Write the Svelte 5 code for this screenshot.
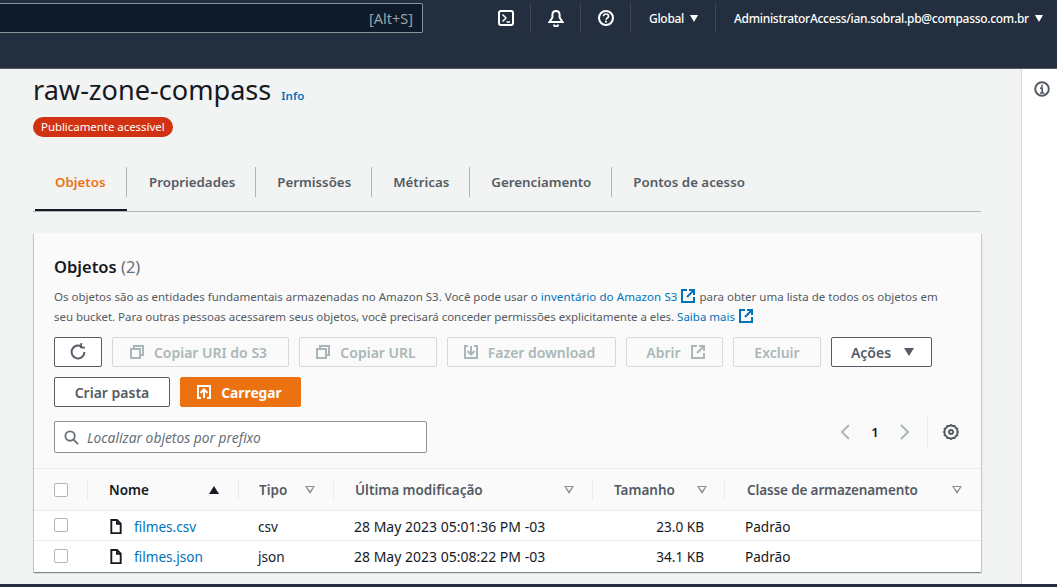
<script>
  const tabs = ['Objetos', 'Propriedades', 'Permissões', 'Métricas', 'Gerenciamento', 'Pontos de acesso']

  const columns = [
    { label: 'Nome', sort: 'asc' },
    { label: 'Tipo' },
    { label: 'Última modificação' },
    { label: 'Tamanho' },
    { label: 'Classe de armazenamento' },
  ]

  const objects = [
    { name: 'filmes.csv', type: 'csv', modified: '28 May 2023 05:01:36 PM -03', size: '23.0 KB', storage: 'Padrão' },
    { name: 'filmes.json', type: 'json', modified: '28 May 2023 05:08:22 PM -03', size: '34.1 KB', storage: 'Padrão' },
  ]
</script>

{#snippet external(cls)}
  <svg class={cls} viewBox="0 0 14 14" width="14" height="14" fill="none" stroke="currentColor" stroke-width="2">
    <path d="M6 1H1v12h12V8" />
    <path d="M8 1h5v5M13 1 6 8" />
  </svg>
{/snippet}

{#snippet copy()}
  <svg viewBox="0 0 14 14" width="14" height="14" fill="none" stroke="currentColor" stroke-width="2">
    <rect x="1" y="4" width="9" height="9" />
    <path d="M4 3V1h9v9h-2" />
  </svg>
{/snippet}

<div class="page">
  <header class="topbar">
    <div class="top-row">
      <div class="search"><span>[Alt+S]</span></div>
      <div class="top-items">
        <div class="top-icon first">
          <svg viewBox="0 0 16 16" width="16" height="16" fill="none" stroke="#fff" stroke-width="2">
            <rect x="1" y="1" width="14" height="14" rx="2" />
            <path d="M4.5 4.5 8 8l-3.5 3.500M8.500 12H12" stroke-width="1.500" />
          </svg>
        </div>
        <div class="top-icon">
          <svg viewBox="0 0 18 18" width="18" height="18" fill="none" stroke="#fff" stroke-width="2">
            <path d="M9 2c-2.5 0-3.600 2-3.600 4v2.500L2.500 13h13l-2.900-4.500V6C12.600 4 11.500 2 9 2Z" />
            <path d="M7 15.500a2 2 0 0 0 4 0" />
          </svg>
        </div>
        <div class="top-icon">
          <svg viewBox="0 0 16 16" width="16" height="16" fill="none" stroke="#fff" stroke-width="2">
            <circle cx="8" cy="8" r="7" />
            <path d="M5.500 6.300C5.500 4.800 6.700 4 8 4s2.500.8 2.500 2.200c0 2-2.500 1.800-2.500 3.600" stroke-width="1.700" />
            <path d="M8 10.800v1.700" />
          </svg>
        </div>
        <div class="top-label region">Global <i class="caret"></i></div>
        <div class="top-label account">AdministratorAccess/ian.sobral.pb@compasso.com.br <i class="caret"></i></div>
      </div>
    </div>
  </header>

  <div class="body">
    <main class="content">
      <div class="title-row">
        <h1>raw-zone-compass</h1>
        <a class="info">Info</a>
      </div>
      <span class="badge">Publicamente acessível</span>

      <nav class="tabs">
        {#each tabs as tab, i}
          <div class="tab" class:active={i === 0}><span>{tab}</span></div>
        {/each}
      </nav>

      <section class="card">
        <div class="card-head">
          <h2>Objetos <span>(2)</span></h2>
          <p>
            Os objetos são as entidades fundamentais armazenadas no Amazon S3. Você pode usar o
            <a class="inv">inventário do Amazon S3</a> {@render external('ext')} para obter uma lista de todos os objetos em<br />
            <span class="second">seu bucket. Para outras pessoas acessarem seus objetos, você precisará conceder permissões explicitamente a eles.</span>
            <a>Saiba mais</a> {@render external('ext')}
          </p>

          <div class="actions">
            <button class="btn refresh" aria-label="Atualizar">
              <svg viewBox="0 0 18 18" width="18" height="18" fill="none" stroke="#545b64" stroke-width="2">
                <path d="M15.500 9A6.500 6.500 0 1 1 12.500 3.500" />
                <path d="M12 .5v4h4" stroke-width="1.800" transform="rotate(8 14 3)" />
              </svg>
            </button>
            <button class="btn off w-uri">{@render copy()} Copiar URI do S3</button>
            <button class="btn off w-url">{@render copy()} Copiar URL</button>
            <button class="btn off w-dl">
              <svg viewBox="0 0 14 14" width="14" height="14" fill="none" stroke="currentColor" stroke-width="2">
                <path d="M4 1H1v12h12V1h-3" />
                <path d="M7 1v8M3.500 6 7 9.500 10.500 6" />
              </svg>
              Fazer download
            </button>
            <button class="btn off w-open">Abrir {@render external('')}</button>
            <button class="btn off w-del">Excluir</button>
            <button class="btn w-act">Ações <i class="caret big"></i></button>
            <button class="btn w-new">Criar pasta</button>
            <button class="btn primary">
              <svg viewBox="0 0 14 14" width="14" height="14" fill="none" stroke="#fff" stroke-width="2">
                <path d="M4 13H1V1h12v12h-3" />
                <path d="M7 13V5M3.500 8 7 4.500 10.500 8" />
              </svg>
              Carregar
            </button>
          </div>

          <div class="filter-row">
            <div class="filter">
              <svg viewBox="0 0 16 16" width="15" height="15" fill="none" stroke="#687078" stroke-width="2">
                <circle cx="6.500" cy="6.500" r="5" />
                <path d="m10 10 5 5" />
              </svg>
              <span>Localizar objetos por prefixo</span>
            </div>
            <div class="pager">
              <svg viewBox="0 0 10 16" width="10" height="16" fill="none" stroke="#aab7b8" stroke-width="2"><path d="M9 1 2 8l7 7" /></svg>
              <b>1</b>
              <svg viewBox="0 0 10 16" width="10" height="16" fill="none" stroke="#aab7b8" stroke-width="2"><path d="m1 1 7 7-7 7" /></svg>
              <div class="gear">
                <svg viewBox="0 0 16 16" width="16" height="16" fill="none" stroke="#545b64" stroke-width="2">
                  <path d="M8 1l1.600 1.100 2-.1 1 1.800 1.700 1-.1 2L15 8l-.8 1.300.1 1.900-1.700 1-1 1.800-2-.1L8 15l-1.600-1.100-2 .1-1-1.800-1.700-1 .1-1.900L1 8l.8-1.200-.1-2 1.700-1 1-1.800 2 .1L8 1Z" />
                  <circle cx="8" cy="8" r="2" />
                </svg>
              </div>
            </div>
          </div>
        </div>

        <div class="grid head">
          <div class="check-cell"><span class="check"></span></div>
          {#each columns as col}
            <div class="th" class:sorted={col.sort}>
              <span>{col.label}</span>
              <i class="sort"></i>
            </div>
          {/each}
        </div>
        {#each objects as obj}
          <div class="grid row">
            <div class="check-cell"><span class="check"></span></div>
            <div class="name">
              <svg viewBox="0 0 12 16" width="12" height="15" fill="none" stroke="#16191f" stroke-width="2">
                <path d="M1 1h6l4 4v10H1Z" />
                <path d="M7 1v4h4" />
              </svg>
              <a>{obj.name}</a>
            </div>
            <div class="type">{obj.type}</div>
            <div class="date">{obj.modified}</div>
            <div class="size">{obj.size}</div>
            <div class="storage">{obj.storage}</div>
          </div>
        {/each}
      </section>
    </main>

    <aside class="rail">
      <svg viewBox="0 0 16 16" width="16" height="16" fill="none" stroke="#545b64" stroke-width="2">
        <circle cx="8" cy="8" r="6.800" />
        <path d="M6 7.200h2.200V12M6 12h4.400M8 3.800v2" stroke-width="1.700" />
      </svg>
    </aside>
  </div>
  <div class="footer"></div>
</div>

<style>
  :global(body) {
    margin: 0;
    background: #f2f3f3;
    overflow: hidden;
  }

  .page {
    width: 1057px;
    height: 587px;
    display: flex;
    flex-direction: column;
    overflow: hidden;
    font-family: "Noto Sans", "Open Sans", sans-serif;
    color: #16191f;
  }

  /* top navigation */
  .topbar {
    height: 68px;
    flex: none;
    background: #232f3e;
    border-bottom: 1px solid #545b64;
    box-sizing: content-box;
  }
  .top-row {
    display: flex;
    align-items: flex-start;
    padding-top: 3px;
  }
  .search {
    width: 423px;
    height: 30px;
    flex: none;
    box-sizing: border-box;
    background: #0f1b2a;
    border: 1px solid #879596;
    border-left: 0;
    border-radius: 0 2px 2px 0;
    display: flex;
    align-items: center;
    justify-content: flex-end;
    padding-right: 9px;
    color: #95a5a6;
    font-size: 14.500px;
  }
  .top-items {
    flex: 1;
    display: flex;
    align-items: center;
    height: 30px;
    color: #fff;
    font-size: 12px;
  }
  .top-icon {
    width: 49px;
    height: 30px;
    display: flex;
    align-items: center;
    justify-content: center;
    border-right: 1px solid #414750;
    box-sizing: content-box;
  }
  .top-icon.first { margin-left: 58px; }
  .top-label {
    height: 30px;
    display: flex;
    align-items: center;
    gap: 6px;
    white-space: nowrap;
    letter-spacing: -0.3px;
    font-weight: 500;
  }
  .region {
    width: 85px;
    box-sizing: border-box;
    padding-left: 18px;
    border-right: 1px solid #414750;
  }
  .account { padding-left: 18px; }
  .caret {
    width: 0;
    height: 0;
    border-left: 4px solid transparent;
    border-right: 4px solid transparent;
    border-top: 7px solid #fff;
  }
  .caret.big {
    border-left-width: 5.500px;
    border-right-width: 5.500px;
    border-top: 8px solid #545b64;
    margin-left: 7px;
  }

  .body {
    flex: 1;
    display: flex;
    min-height: 0;
  }
  .content {
    width: 1021px;
    flex: none;
    box-sizing: border-box;
    padding: 3px 40px 0 33px;
    background: #f2f3f3;
  }
  .rail {
    flex: 1;
    background: #fff;
    border-left: 1px solid #d5dbdb;
    display: flex;
    justify-content: center;
    padding: 12px 6px 0 11px;
    box-sizing: border-box;
    align-items: flex-start;
  }
  .footer {
    height: 3px;
    flex: none;
    background: #232f3e;
  }

  /* title */
  .title-row {
    display: flex;
    align-items: baseline;
    gap: 10px;
  }
  h1 {
    margin: 0;
    font-size: 27.100px;
    line-height: 36px;
    font-weight: 400;
    color: #16191f;
  }
  .info {
    font-size: 11.500px;
    font-weight: 600;
    color: #0073bb;
  }
  .badge {
    display: inline-block;
    margin-top: 9px;
    height: 20px;
    line-height: 19px;
    padding: 0 8px;
    border-radius: 10px;
    background: #d13212;
    color: #fff;
    font-size: 11.400px;
    white-space: nowrap;
    vertical-align: top;
  }

  /* tabs */
  .tabs {
    margin: 26px 0 0 0;
    height: 48px;
    display: flex;
    border-bottom: 1px solid #aab7b8;
    box-sizing: content-box;
  }
  .tab {
    height: 48px;
    display: flex;
    align-items: center;
    padding: 0 21px;
    box-sizing: border-box;
    font-size: 13.300px;
    font-weight: 600;
    color: #545b64;
    white-space: nowrap;
    position: relative;
  }
  .tab span {
    margin-bottom: 10px;
  }
  .tab::after {
    content: '';
    position: absolute;
    right: 0;
    top: 4px;
    height: 30px;
    width: 1px;
    background: #aab7b8;
  }
  .tab:last-child::after { display: none; }
  .tab.active {
    color: #ec7211;
    border-bottom: 2px solid #16191f;
    width: 92px;
    margin-left: 2px;
    padding-left: 20px;
  }
  .tab.active span { margin-bottom: 8px; }
  .tab.active::after { right: 0; }
  .tab.active + .tab { margin-left: 1px; }

  /* card */
  .card {
    margin: 21px 0 0 1px;
    background: #fafafa;
    box-shadow: 0 1px 1px rgba(0, 28, 36, 0.3), 1px 1px 1px rgba(0, 28, 36, 0.15), -1px 1px 1px rgba(0, 28, 36, 0.15);
  }
  .card-head {
    padding: 22px 20px 11px;
    border-bottom: 1px solid #eaeded;
  }
  h2 {
    margin: 0;
    font-size: 16.500px;
    line-height: 24px;
    font-weight: 600;
    color: #16191f;
  }
  h2 span {
    font-weight: 400;
    color: #687078;
  }
  p {
    margin: 8px 0 0;
    font-size: 11.500px;
    line-height: 20px;
    color: #545b64;
    white-space: nowrap;
  }
  p a { color: #0073bb; }
  .inv { letter-spacing: 0.09px; }
  .second { letter-spacing: -0.045px; }
  .ext {
    color: #0073bb;
    vertical-align: -2px;
    margin: 0 1px;
  }

  .actions {
    margin-top: 10px;
    display: flex;
    flex-wrap: wrap;
    gap: 10px;
  }
  .btn {
    height: 30px;
    box-sizing: border-box;
    display: inline-flex;
    align-items: center;
    justify-content: center;
    gap: 10px;
    padding: 0;
    background: #fff;
    border: 1px solid #545b64;
    border-radius: 2px;
    font-family: inherit;
    font-size: 14px;
    font-weight: 600;
    color: #545b64;
    white-space: nowrap;
  }
  .btn.off {
    border-color: #d5dbdb;
    background: #fafafa;
    color: #aab7b8;
  }
  .refresh { width: 48px; }
  .w-uri { width: 177px; padding-right: 4px; }
  .w-url { width: 138px; padding-right: 4px; }
  .w-dl { width: 169px; padding-right: 4px; }
  .w-open { width: 97px; padding-left: 2px; }
  .w-del { width: 88px; }
  .w-act { width: 101px; gap: 6px; padding-left: 2px; }
  .w-new { width: 116px; }
  .btn.primary {
    width: 121px;
    padding-right: 2px;
    background: #ec7211;
    border-color: #ec7211;
    color: #fff;
    font-size: 13.800px;
    font-weight: 700;
  }

  .filter-row {
    margin-top: 10px;
    display: flex;
    align-items: center;
    justify-content: space-between;
  }
  .filter {
    width: 373px;
    height: 32px;
    box-sizing: border-box;
    background: #fff;
    border: 1px solid #879596;
    border-radius: 2px;
    display: flex;
    align-items: center;
    gap: 8px;
    padding-left: 9px;
    font-size: 13.800px;
    font-style: italic;
    color: #687078;
  }
  .pager {
    display: flex;
    align-items: center;
    margin-bottom: 10px;
    padding-right: 2px;
    font-size: 13px;
    color: #16191f;
  }
  .pager b {
    width: 50px;
    text-align: center;
    font-weight: 600;
  }
  .gear {
    margin-left: 17px;
    padding-left: 15px;
    height: 30px;
    display: flex;
    align-items: center;
    border-left: 1px solid #eaeded;
  }

  /* table */
  .grid {
    display: grid;
    grid-template-columns: 54px 151px 95px 259px 132px 1fr;
  }
  .head {
    height: 42px;
    box-sizing: border-box;
    align-items: center;
    border-bottom: 1px solid #eaeded;
  }
  .row {
    height: 30px;
    box-sizing: border-box;
    padding-top: 1px;
    align-items: center;
    background: #fff;
    border-bottom: 1px solid #eaeded;
    font-size: 13.600px;
    color: #16191f;
  }
  .row:last-child { border-bottom: 0; height: 31px; padding-bottom: 1px; }
  .check-cell {
    padding-left: 20px;
    display: flex;
    height: 21px;
    align-items: center;
    border-right: 1px solid #eaeded;
  }
  .row .check-cell { border-right: 0; margin-top: -2px; }
  .check {
    width: 14px;
    height: 14px;
    box-sizing: border-box;
    background: #fff;
    border: 1px solid #aab7b8;
    border-radius: 2px;
  }
  .th {
    height: 21px;
    display: flex;
    align-items: center;
    justify-content: space-between;
    padding: 0 18px 0 21px;
    border-right: 1px solid #eaeded;
    font-size: 13.500px;
    font-weight: 600;
    color: #545b64;
    white-space: nowrap;
  }
  .th:nth-child(3) { padding-left: 20px; }
  .th:nth-child(5) { padding-right: 17px; }
  .th:last-child { border-right: 0; padding-left: 22px; padding-right: 19px; letter-spacing: -0.13px; }
  .th.sorted { color: #16191f; padding-right: 19px; }
  .sort {
    width: 0;
    height: 0;
    position: relative;
    border-left: 5.500px solid transparent;
    border-right: 5.500px solid transparent;
    border-top: 8px solid #879596;
  }
  .sort::after {
    content: '';
    position: absolute;
    left: -3px;
    top: -7px;
    border-left: 3px solid transparent;
    border-right: 3px solid transparent;
    border-top: 4px solid #fafafa;
  }
  .sorted .sort {
    border-top: 0;
    border-bottom: 8px solid #16191f;
  }
  .sorted .sort::after { display: none; }
  .name {
    display: flex;
    align-items: center;
    gap: 12px;
    padding-left: 22px;
  }
  .name a { color: #0073bb; }
  .type { padding-left: 19px; }
  .date { padding-left: 20px; white-space: nowrap; font-size: 14px; }
  .size { text-align: right; padding-right: 21px; }
  .storage { padding-left: 20px; }
</style>
